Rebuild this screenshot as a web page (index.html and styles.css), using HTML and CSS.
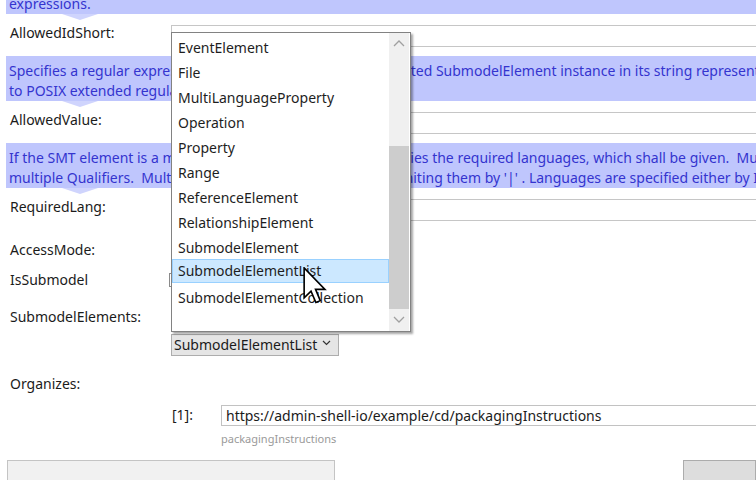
FILE: index.html
```html
<!DOCTYPE html>
<html>
<head>
<meta charset="utf-8">
<link rel="stylesheet" href="styles.css">
</head>
<body>
<div class="panel">
  <div class="desc first">Specifies a regular expression to validate the IdShort of the instantiated SubmodelElement instance, according to POSIX extended regular<br>expressions.</div>
  <div class="row field-row"><div class="label">AllowedIdShort:</div><div class="input"></div></div>
  <div class="desc">Specifies a regular expression to check a value of an instantiated SubmodelElement instance in its string representation. The regular expression shall conform<br>to POSIX extended regular expressions.</div>
  <div class="row field-row"><div class="label">AllowedValue:</div><div class="input"></div></div>
  <div class="desc">If the SMT element is a multilanguage property, then it specifies the required languages, which shall be given.&nbsp; Multiple languages can be given by using<br>multiple Qualifiers.&nbsp; Multiple languages can be given by delimiting them by '|' . Languages are specified either by ISO 639-1 codes.</div>
  <div class="row field-row"><div class="label">RequiredLang:</div><div class="input"></div></div>
  <div class="row access-row"><div class="label">AccessMode:</div></div>
  <div class="row issub-row"><div class="label">IsSubmodel</div><div class="check"></div></div>
  <div class="row subel-row"><div class="label">SubmodelElements:</div></div>
  <div class="row combo-row"><div class="combo">SubmodelElementList<svg class="chev" width="9" height="6" viewBox="0 0 9 6"><polyline points="1,1 4.5,4.5 8,1" fill="none" stroke="#333" stroke-width="1.2"/></svg></div></div>
  <div class="row org-row"><div class="label">Organizes:</div></div>
  <div class="row item-row"><div class="idx">[1]:</div><div class="input url">https://admin-shell-io/example/cd/packagingInstructions</div></div>
  <div class="row hint-row"><div class="hint">packagingInstructions</div></div>
  <div class="row btn-row"><div class="btn wide">Take over</div><div class="spacer"></div><div class="btn small"></div></div>
</div>

<div class="popup">
  <ul class="items">
    <li>EventElement</li>
    <li>File</li>
    <li>MultiLanguageProperty</li>
    <li>Operation</li>
    <li>Property</li>
    <li>Range</li>
    <li>ReferenceElement</li>
    <li>RelationshipElement</li>
    <li>SubmodelElement</li>
    <li class="sel">SubmodelElementList</li>
    <li>SubmodelElementCollection</li>
  </ul>
  <div class="scrollbar">
    <div class="arrow up"><svg width="12" height="8" viewBox="0 0 12 8"><polyline points="1,7 6,2 11,7" fill="none" stroke="#a0a0a0" stroke-width="1.3"/></svg></div>
    <div class="track"><div class="thumb"></div></div>
    <div class="arrow down"><svg width="12" height="8" viewBox="0 0 12 8"><polyline points="1,1 6,6 11,1" fill="none" stroke="#a0a0a0" stroke-width="1.3"/></svg></div>
  </div>
</div>

<svg class="cursor" width="24" height="38" viewBox="0 0 13 21">
  <polygon points="0.5,0.5 0.5,17 4.3,13.3 7,19.6 9.4,18.6 6.8,12.4 12,12.4" fill="#fff" stroke="#000" stroke-width="0.9" stroke-linejoin="miter"/>
</svg>
</body>
</html>
```

FILE: styles.css
```css
* { box-sizing: border-box; }
html, body { margin: 0; padding: 0; background: #ffffff; }
body {
  width: 756px;
  height: 480px;
  overflow: hidden;
  position: relative;
  font-family: "Noto Sans", "Open Sans", sans-serif;
  font-size: 14px;
  color: #1b1b1b;
}
.panel { display: flex; flex-direction: column; }

.desc {
  position: relative;
  margin-left: 6px;
  margin-right: -400px;
  height: 45px;
  padding: 5px 0 0 3px;
  line-height: 19.5px;
  white-space: nowrap;
  background: #bfc6fd;
  color: #3434cf;
}
.desc::after {
  content: "";
  position: absolute;
  left: 56px;
  top: 100%;
  border-left: 18px solid transparent;
  border-right: 18px solid transparent;
  border-top: 6px solid #cfd4fd;
}
.desc.first { margin-top: -31px; }

.row { display: flex; align-items: flex-start; }
.label { width: 171px; flex: none; padding-left: 10px; line-height: 20px; white-space: nowrap; }

.field-row { margin-top: 11px; margin-bottom: 9px; height: 22px; }
.field-row .label { margin-top: -2px; }
.input {
  flex: 1;
  height: 22px;
  margin-right: -20px;
  border: 1px solid #c6c6c6;
  background: #fff;
}

.access-row { margin-top: 10px; height: 20px; }
.issub-row { margin-top: 10px; height: 20px; }
.check { width: 14px; height: 14px; margin-top: 3px; margin-left: -2px; border: 1px solid #8a8a8a; background: #fff; }
.subel-row { margin-top: 17px; height: 20px; }

.combo-row { margin-top: 7px; height: 22px; padding-left: 171px; }
.combo {
  width: 168px;
  height: 22px;
  display: flex;
  align-items: center;
  gap: 5px;
  padding-left: 2px;
  background: #e5e5e5;
  border: 1px solid #adadad;
  color: #1b1b1b;
  line-height: 20px;
}
.chev { flex: none; margin-top: -4px; }

.org-row { margin-top: 18px; height: 20px; }

.item-row { margin-top: 11px; height: 21px; padding-left: 172px; }
.idx { width: 49px; flex: none; line-height: 20px; }
.url {
  height: 21px;
  line-height: 19px;
  padding-left: 4px;
  white-space: nowrap;
  border-color: #c2c2c2;
}

.hint-row { margin-top: 6px; height: 14px; padding-left: 221px; }
.hint { font-size: 11px; line-height: 14px; color: #9a9a9a; }

.btn-row { margin-top: 14px; height: 44px; padding-left: 7px; }
.btn {
  height: 44px;
  border: 1px solid #c4c4c4;
  background: #f1f1f1;
  text-align: center;
  padding-top: 15px;
  font-size: 14px;
  line-height: 20px;
}
.btn.wide { width: 328px; }
.spacer { flex: 1; }
.btn.small { width: 73px; background: #dddddd; border-color: #acacac; }

/* dropdown popup overlay */
.popup {
  position: absolute;
  left: 171px;
  top: 32px;
  width: 240px;
  height: 300px;
  display: flex;
  background: #ffffff;
  border: 1px solid #828282;
  box-shadow: 2px 2px 2px rgba(0,0,0,0.35);
}
.items {
  list-style: none;
  margin: 0;
  padding: 1px 0 0 0;
  flex: 1;
}
.items li {
  height: 25px;
  line-height: 25px;
  padding-left: 5px;
  color: #1e1e1e;
  white-space: nowrap;
  border: 1px solid transparent;
}
.items li.sel {
  background: #cce8ff;
  border-color: #99d1ff;
  height: 24px;
  line-height: 22px;
  margin-bottom: 1px;
}
.scrollbar {
  width: 20px;
  flex: none;
  display: flex;
  flex-direction: column;
  background: #f0f0f0;
  margin-right: 1px;
}
.arrow { height: 20px; display: flex; align-items: center; justify-content: center; flex: none; }
.arrow.down { height: 22px; }
.track { flex: 1; display: flex; flex-direction: column; justify-content: flex-end; }
.thumb { height: 163px; background: #cdcdcd; }

.cursor { position: absolute; left: 303px; top: 267px; }
```
